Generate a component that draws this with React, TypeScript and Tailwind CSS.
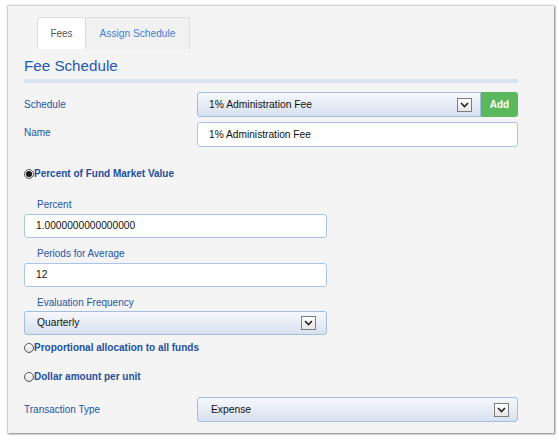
import React from "react";

const font = { fontFamily: '"Liberation Sans", Arial, sans-serif' };

function Chevron() {
  return (
    <span className="flex h-[14px] w-[15px] items-center justify-center border border-[#7d7d7d] bg-gradient-to-b from-[#ffffff] to-[#e6e6e6]">
      <svg width="9" height="6" viewBox="0 0 9 6">
        <path d="M1 1 L4.5 4.5 L8 1" fill="none" stroke="#222" strokeWidth="1.6" />
      </svg>
    </span>
  );
}

function Select({ value, className = "" }: { value: string; className?: string }) {
  return (
    <div
      className={`flex items-center justify-between border border-[#a4bcdd] bg-gradient-to-b from-[#f6f8fc] to-[#d7e1ef] pr-[8px] text-[10.3px] text-[#111] ${className}`}
    >
      <span>{value}</span>
      <Chevron />
    </div>
  );
}

function Input({ value, className = "" }: { value: string; className?: string }) {
  return (
    <div
      className={`flex items-center rounded-[3px] border border-[#a9c4e6] bg-white pl-[11px] text-[10.2px] text-[#111] ${className}`}
    >
      {value}
    </div>
  );
}

function Radio({ checked, label, className = "" }: { checked?: boolean; label: string; className?: string }) {
  return (
    <div className={`flex h-[12px] items-center ${className}`}>
      <span className="flex h-[10px] w-[10px] items-center justify-center rounded-full border border-[#555] bg-gradient-to-b from-[#ffffff] to-[#dedede]">
        {checked && <span className="h-[6px] w-[6px] rounded-full bg-[#111]" />}
      </span>
      <span className="text-[10px] font-bold leading-[12px] text-[#1e4f9e]">{label}</span>
    </div>
  );
}

export default function App() {
  return (
    <div className="h-[440px] w-[559px] bg-white pl-[7px] pt-[5px]" style={font}>
      <div className="h-[428px] w-[547px] border-l border-t border-[#cfcfcf] bg-[#f4f4f4] pl-[16px] shadow-[1px_1px_2px_rgba(0,0,0,0.55)]">
        <div className="ml-[13px] flex pt-[11px]">
          <div className="flex h-[32px] w-[49px] items-center justify-center rounded-t-[3px] border border-b-0 border-[#dcdcdc] bg-white text-[10px] text-[#555]">
            Fees
          </div>
          <div className="flex h-[32px] w-[104px] items-center justify-center rounded-t-[3px] border border-b-0 border-l-0 border-[#dcdcdc] bg-[#f1f1f1] text-[10.2px] text-[#3f7fd4]">
            Assign Schedule
          </div>
        </div>

        <h1 className="mt-[8px] text-[15.2px] leading-[18px] text-[#1f58b0]">Fee Schedule</h1>
        <div className="mt-[4px] h-[4px] w-[494px] bg-[#dae4f1]" />

        <div className="mt-[9px] flex w-[494px] items-center">
          <label className="w-[173px] text-[10px] text-[#2355a5]">Schedule</label>
          <Select value="1% Administration Fee" className="h-[25px] w-[284px] rounded-l-[3px] pl-[11px]" />
          <button className="h-[25px] w-[37px] rounded-r-[3px] bg-[#5cb85c] text-[10px] font-bold text-white">
            Add
          </button>
        </div>

        <div className="mt-[5px] flex w-[494px] items-center">
          <label className="-mt-[4px] w-[173px] text-[10px] text-[#2355a5]">Name</label>
          <Input value="1% Administration Fee" className="h-[25px] w-[321px]" />
        </div>

        <Radio checked label="Percent of Fund Market Value" className="mt-[21px]" />

        <div className="mt-[19px] pl-[13px] text-[10px] leading-[12px] text-[#2355a5]">Percent</div>
        <Input value="1.0000000000000000" className="mt-[3px] h-[24px] w-[303px]" />

        <div className="mt-[10px] pl-[13px] text-[10px] leading-[12px] text-[#2355a5]">Periods for Average</div>
        <Input value="12" className="mt-[3px] h-[24px] w-[303px]" />

        <div className="mt-[10px] pl-[13px] text-[10px] leading-[12px] text-[#2355a5]">Evaluation Frequency</div>
        <Select value="Quarterly" className="mt-[2px] h-[24px] w-[303px] rounded-[3px] pl-[12px] pr-[10px]" />

        <Radio label="Proportional allocation to all funds" className="mt-[7px]" />
        <Radio label="Dollar amount per unit" className="mt-[17px]" />

        <div className="mt-[14px] flex w-[494px] items-center">
          <label className="w-[173px] text-[10px] text-[#2355a5]">Transaction Type</label>
          <Select value="Expense" className="h-[25px] w-[321px] rounded-[3px] pl-[13px]" />
        </div>
      </div>
    </div>
  );
}
